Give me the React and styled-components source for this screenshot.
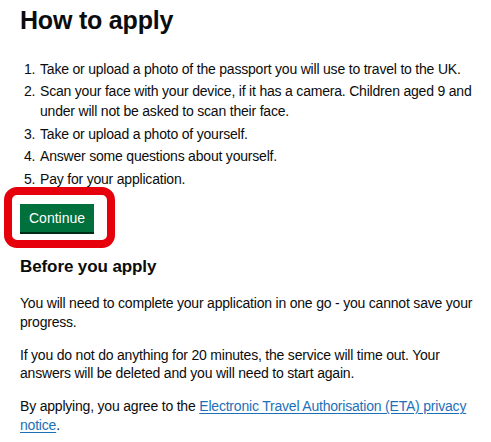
import styled, { createGlobalStyle } from "styled-components";

const GlobalStyle = createGlobalStyle`
  body {
    margin: 0;
    background: #ffffff;
    color: #0b0c0c;
    font-family: "Liberation Sans", Arial, sans-serif;
  }
`;

const Page = styled.main`
  width: 462px;
  padding: 5px 0 0 20px;
`;

const Title = styled.h1`
  margin: 0;
  font-size: 25px;
  line-height: 30px;
  font-weight: 700;
  letter-spacing: -0.2px;
`;

const Steps = styled.ol`
  margin: 23.5px 0 0;
  padding: 0 0 0 19px;
  font-size: 14px;
  line-height: 20px;
  letter-spacing: -0.2px;
`;

const Step = styled.li`
  margin-bottom: 2.5px;
  padding-left: 1px;
`;

const ButtonWrap = styled.div`
  position: relative;
  display: inline-block;
  margin-top: 13px;
`;

const Highlight = styled.span`
  position: absolute;
  top: -17px;
  left: -16px;
  right: -21px;
  bottom: -16px;
  border: 8px solid #e5000b;
  border-radius: 13px;
  pointer-events: none;
`;

const Button = styled.button`
  display: block;
  height: 28px;
  padding: 0 9px;
  border: 0;
  border-radius: 0;
  background: #00703c;
  box-shadow: 0 2px 0 #002d18;
  color: #ffffff;
  font-family: inherit;
  font-size: 14px;
  line-height: 28px;
  cursor: pointer;
`;

const Subtitle = styled.h2`
  margin: 24px 0 0;
  font-size: 17px;
  line-height: 22px;
  font-weight: 700;
  letter-spacing: -0.1px;
`;

const Para = styled.p`
  margin: ${(p) => (p.$first ? "16px" : "14.7px")} 0 0;
  font-size: 14px;
  line-height: 18.5px;
  letter-spacing: -0.2px;
`;

const Link = styled.a`
  color: #1d70b8;
  text-decoration: underline;
  text-underline-offset: 2px;
`;

export default function App() {
  return (
    <>
      <GlobalStyle />
      <Page>
        <Title>How to apply</Title>
        <Steps>
          <Step>Take or upload a photo of the passport you will use to travel to the UK.</Step>
          <Step>
            Scan your face with your device, if it has a camera. Children aged 9 and under will
            not be asked to scan their face.
          </Step>
          <Step>Take or upload a photo of yourself.</Step>
          <Step>Answer some questions about yourself.</Step>
          <Step>Pay for your application.</Step>
        </Steps>
        <ButtonWrap>
          <Button>Continue</Button>
          <Highlight />
        </ButtonWrap>
        <Subtitle>Before you apply</Subtitle>
        <Para $first>
          You will need to complete your application in one go - you cannot save your progress.
        </Para>
        <Para>
          If you do not do anything for 20 minutes, the service will time out. Your answers will
          be deleted and you will need to start again.
        </Para>
        <Para>
          By applying, you agree to the{" "}
          <Link href="#">Electronic Travel Authorisation (ETA) privacy notice</Link>.
        </Para>
      </Page>
    </>
  );
}
